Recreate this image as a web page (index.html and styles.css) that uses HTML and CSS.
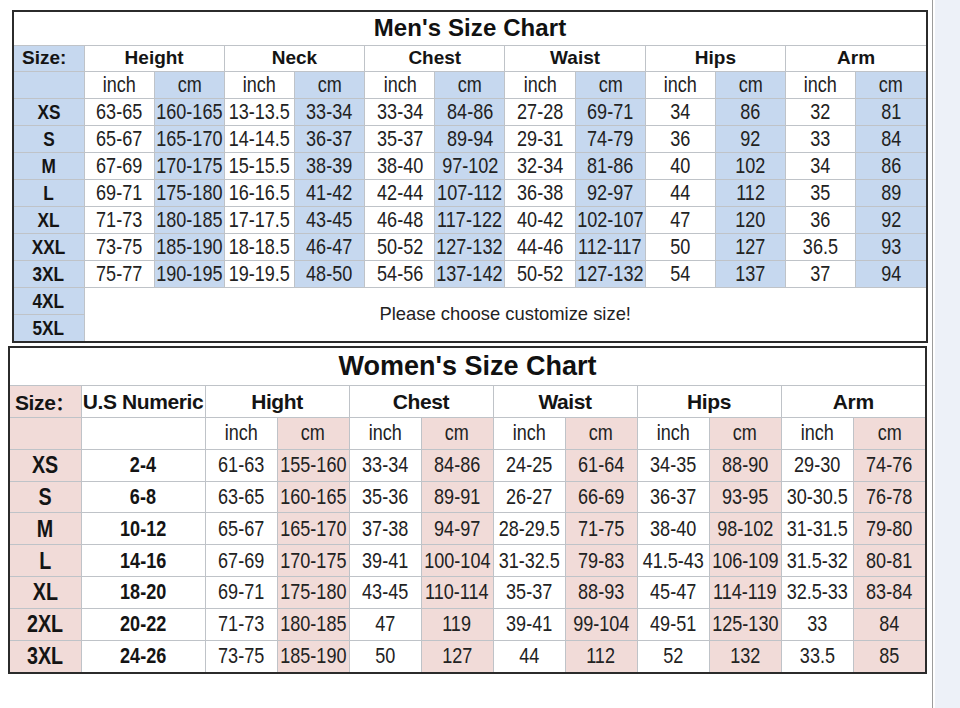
FILE: index.html
```html
<!DOCTYPE html>
<html>
<head>
<meta charset="utf-8">
<link rel="stylesheet" href="styles.css">
</head>
<body>
<div class="page">
  <div class="sheet">
    <div class="chart men-chart">
      <table class="men">
        <colgroup><col class="col-size"><col span="12"></colgroup>
        <tr class="title-row"><th class="title" colspan="13">Men's Size Chart</th></tr>
        <tr class="row hdr">
          <th class="size-h">Size:</th>
          <th colspan="2">Height</th><th colspan="2">Neck</th><th colspan="2">Chest</th>
          <th colspan="2">Waist</th><th colspan="2">Hips</th><th colspan="2">Arm</th>
        </tr>
        <tr class="row sub">
          <td></td><td><span class="n">inch</span></td><td><span class="n">cm</span></td><td><span class="n">inch</span></td><td><span class="n">cm</span></td><td><span class="n">inch</span></td><td><span class="n">cm</span></td><td><span class="n">inch</span></td><td><span class="n">cm</span></td><td><span class="n">inch</span></td><td><span class="n">cm</span></td><td><span class="n">inch</span></td><td><span class="n">cm</span></td>
        </tr>
        <tr class="row"><td><span class="n">XS</span></td><td><span class="n">63-65</span></td><td><span class="n">160-165</span></td><td><span class="n">13-13.5</span></td><td><span class="n">33-34</span></td><td><span class="n">33-34</span></td><td><span class="n">84-86</span></td><td><span class="n">27-28</span></td><td><span class="n">69-71</span></td><td><span class="n">34</span></td><td><span class="n">86</span></td><td><span class="n">32</span></td><td><span class="n">81</span></td></tr>
        <tr class="row"><td><span class="n">S</span></td><td><span class="n">65-67</span></td><td><span class="n">165-170</span></td><td><span class="n">14-14.5</span></td><td><span class="n">36-37</span></td><td><span class="n">35-37</span></td><td><span class="n">89-94</span></td><td><span class="n">29-31</span></td><td><span class="n">74-79</span></td><td><span class="n">36</span></td><td><span class="n">92</span></td><td><span class="n">33</span></td><td><span class="n">84</span></td></tr>
        <tr class="row"><td><span class="n">M</span></td><td><span class="n">67-69</span></td><td><span class="n">170-175</span></td><td><span class="n">15-15.5</span></td><td><span class="n">38-39</span></td><td><span class="n">38-40</span></td><td><span class="n">97-102</span></td><td><span class="n">32-34</span></td><td><span class="n">81-86</span></td><td><span class="n">40</span></td><td><span class="n">102</span></td><td><span class="n">34</span></td><td><span class="n">86</span></td></tr>
        <tr class="row"><td><span class="n">L</span></td><td><span class="n">69-71</span></td><td><span class="n">175-180</span></td><td><span class="n">16-16.5</span></td><td><span class="n">41-42</span></td><td><span class="n">42-44</span></td><td><span class="n">107-112</span></td><td><span class="n">36-38</span></td><td><span class="n">92-97</span></td><td><span class="n">44</span></td><td><span class="n">112</span></td><td><span class="n">35</span></td><td><span class="n">89</span></td></tr>
        <tr class="row"><td><span class="n">XL</span></td><td><span class="n">71-73</span></td><td><span class="n">180-185</span></td><td><span class="n">17-17.5</span></td><td><span class="n">43-45</span></td><td><span class="n">46-48</span></td><td><span class="n">117-122</span></td><td><span class="n">40-42</span></td><td><span class="n">102-107</span></td><td><span class="n">47</span></td><td><span class="n">120</span></td><td><span class="n">36</span></td><td><span class="n">92</span></td></tr>
        <tr class="row"><td><span class="n">XXL</span></td><td><span class="n">73-75</span></td><td><span class="n">185-190</span></td><td><span class="n">18-18.5</span></td><td><span class="n">46-47</span></td><td><span class="n">50-52</span></td><td><span class="n">127-132</span></td><td><span class="n">44-46</span></td><td><span class="n">112-117</span></td><td><span class="n">50</span></td><td><span class="n">127</span></td><td><span class="n">36.5</span></td><td><span class="n">93</span></td></tr>
        <tr class="row"><td><span class="n">3XL</span></td><td><span class="n">75-77</span></td><td><span class="n">190-195</span></td><td><span class="n">19-19.5</span></td><td><span class="n">48-50</span></td><td><span class="n">54-56</span></td><td><span class="n">137-142</span></td><td><span class="n">50-52</span></td><td><span class="n">127-132</span></td><td><span class="n">54</span></td><td><span class="n">137</span></td><td><span class="n">37</span></td><td><span class="n">94</span></td></tr>
        <tr class="row"><td><span class="n">4XL</span></td><td class="note" colspan="12" rowspan="2">Please choose customize size!</td></tr>
        <tr class="row"><td><span class="n">5XL</span></td></tr>
      </table>
    </div>

    <div class="chart women-chart">
      <table class="women">
        <colgroup><col class="col-wsize"><col class="col-us"><col span="10"></colgroup>
        <tr class="title-row"><th class="title" colspan="12">Women's Size Chart</th></tr>
        <tr class="row hdr">
          <th class="size-h">Size<span class="colon">：</span></th><th>U.S Numeric</th>
          <th colspan="2">Hight</th><th colspan="2">Chest</th><th colspan="2">Waist</th>
          <th colspan="2">Hips</th><th colspan="2">Arm</th>
        </tr>
        <tr class="row sub">
          <td></td><td></td><td><span class="n">inch</span></td><td><span class="n">cm</span></td><td><span class="n">inch</span></td><td><span class="n">cm</span></td><td><span class="n">inch</span></td><td><span class="n">cm</span></td><td><span class="n">inch</span></td><td><span class="n">cm</span></td><td><span class="n">inch</span></td><td><span class="n">cm</span></td>
        </tr>
        <tr class="row"><td><span class="n">XS</span></td><td><span class="n">2-4</span></td><td><span class="n">61-63</span></td><td><span class="n">155-160</span></td><td><span class="n">33-34</span></td><td><span class="n">84-86</span></td><td><span class="n">24-25</span></td><td><span class="n">61-64</span></td><td><span class="n">34-35</span></td><td><span class="n">88-90</span></td><td><span class="n">29-30</span></td><td><span class="n">74-76</span></td></tr>
        <tr class="row"><td><span class="n">S</span></td><td><span class="n">6-8</span></td><td><span class="n">63-65</span></td><td><span class="n">160-165</span></td><td><span class="n">35-36</span></td><td><span class="n">89-91</span></td><td><span class="n">26-27</span></td><td><span class="n">66-69</span></td><td><span class="n">36-37</span></td><td><span class="n">93-95</span></td><td><span class="n">30-30.5</span></td><td><span class="n">76-78</span></td></tr>
        <tr class="row"><td><span class="n">M</span></td><td><span class="n">10-12</span></td><td><span class="n">65-67</span></td><td><span class="n">165-170</span></td><td><span class="n">37-38</span></td><td><span class="n">94-97</span></td><td><span class="n">28-29.5</span></td><td><span class="n">71-75</span></td><td><span class="n">38-40</span></td><td><span class="n">98-102</span></td><td><span class="n">31-31.5</span></td><td><span class="n">79-80</span></td></tr>
        <tr class="row"><td><span class="n">L</span></td><td><span class="n">14-16</span></td><td><span class="n">67-69</span></td><td><span class="n">170-175</span></td><td><span class="n">39-41</span></td><td><span class="n">100-104</span></td><td><span class="n">31-32.5</span></td><td><span class="n">79-83</span></td><td><span class="n">41.5-43</span></td><td><span class="n">106-109</span></td><td><span class="n">31.5-32</span></td><td><span class="n">80-81</span></td></tr>
        <tr class="row"><td><span class="n">XL</span></td><td><span class="n">18-20</span></td><td><span class="n">69-71</span></td><td><span class="n">175-180</span></td><td><span class="n">43-45</span></td><td><span class="n">110-114</span></td><td><span class="n">35-37</span></td><td><span class="n">88-93</span></td><td><span class="n">45-47</span></td><td><span class="n">114-119</span></td><td><span class="n">32.5-33</span></td><td><span class="n">83-84</span></td></tr>
        <tr class="row"><td><span class="n">2XL</span></td><td><span class="n">20-22</span></td><td><span class="n">71-73</span></td><td><span class="n">180-185</span></td><td><span class="n">47</span></td><td><span class="n">119</span></td><td><span class="n">39-41</span></td><td><span class="n">99-104</span></td><td><span class="n">49-51</span></td><td><span class="n">125-130</span></td><td><span class="n">33</span></td><td><span class="n">84</span></td></tr>
        <tr class="row"><td><span class="n">3XL</span></td><td><span class="n">24-26</span></td><td><span class="n">73-75</span></td><td><span class="n">185-190</span></td><td><span class="n">50</span></td><td><span class="n">127</span></td><td><span class="n">44</span></td><td><span class="n">112</span></td><td><span class="n">52</span></td><td><span class="n">132</span></td><td><span class="n">33.5</span></td><td><span class="n">85</span></td></tr>
      </table>
    </div>
  </div>
  <div class="scroll-strip"></div>
</div>
</body>
</html>
```

FILE: styles.css
```css
html, body {
  margin: 0;
  padding: 0;
  background: #ffffff;
}

.page {
  display: flex;
  width: 960px;
  height: 708px;
  overflow: hidden;
}

.sheet {
  width: 932px;
  padding: 10px 0 0 8px;
  box-sizing: border-box;
}

.scroll-strip {
  flex: 1;
  border-left: 1px solid #9c9c9c;
  background: linear-gradient(to right, #ffffff 0, #ffffff 2px, #edf1f8 2px);
}

.chart {
  border: 2px solid #2b2b2b;
  background: #ffffff;
}

.men-chart {
  width: 912px;
  margin-left: 4px;
}

.women-chart {
  width: 915px;
  margin-top: 3px;
}

table {
  width: 100%;
  border-collapse: collapse;
  border-style: hidden;
  table-layout: fixed;
  color: #1c1c1c;
}

th, td {
  border: 1px solid #bfc3c8;
  padding: 0;
  text-align: center;
  vertical-align: middle;
  white-space: nowrap;
}

td {
  font-family: "Liberation Sans", Arial, sans-serif;
  font-size: 22px;
  font-weight: normal;
  color: #222222;
}

th {
  font-family: "Liberation Sans", Arial, sans-serif;
  font-weight: bold;
  color: #141414;
}

/* condensed look of the original chart lettering */
.n {
  display: inline-block;
  margin: 0 -20px;
  transform: scaleX(0.82);
}

.title {
  font-family: "Liberation Sans", Arial, sans-serif;
  font-weight: bold;
  color: #111111;
  background: #ffffff;
}

/* ---------- Men ---------- */
.col-size { width: 70px; }

.men .title-row { height: 33px; }
.men .title { font-size: 24px; letter-spacing: 0.1px; }
.men .row { height: 26.6px; }

.men .hdr th {
  font-size: 19px;
  background: #ffffff;
}

.men .hdr .size-h {
  text-align: left;
  padding-left: 8px;
  background: #c6d8ef;
}

.men td:nth-child(odd) { background: #c6d8ef; }

.men td:first-child {
  font-weight: bold;
  font-size: 21px;
  color: #141414;
}

.men .note {
  font-size: 18.4px;
  background: #ffffff;
  color: #222222;
}

/* ---------- Women ---------- */
.col-wsize { width: 71px; }
.col-us { width: 124px; }

.women .title-row { height: 38px; }
.women .title { font-size: 27px; }
.women .row { height: 31.8px; }

.women .hdr th {
  font-size: 21px;
  letter-spacing: -0.4px;
  background: #ffffff;
}

.women .hdr .size-h {
  text-align: left;
  padding-left: 5px;
  background: #f1dbd8;
}

.colon {
  font-family: "Noto Sans CJK SC", sans-serif;
  font-size: 18px;
  letter-spacing: -6px;
}

.women td { font-size: 22px; }

.women td:first-child {
  background: #f1dbd8;
  font-weight: bold;
  font-size: 24px;
  color: #141414;
}

.women td:nth-child(2) {
  font-weight: bold;
  font-size: 22px;
  color: #141414;
}

.women td:nth-child(2n+4) { background: #f1dbd8; }
```
